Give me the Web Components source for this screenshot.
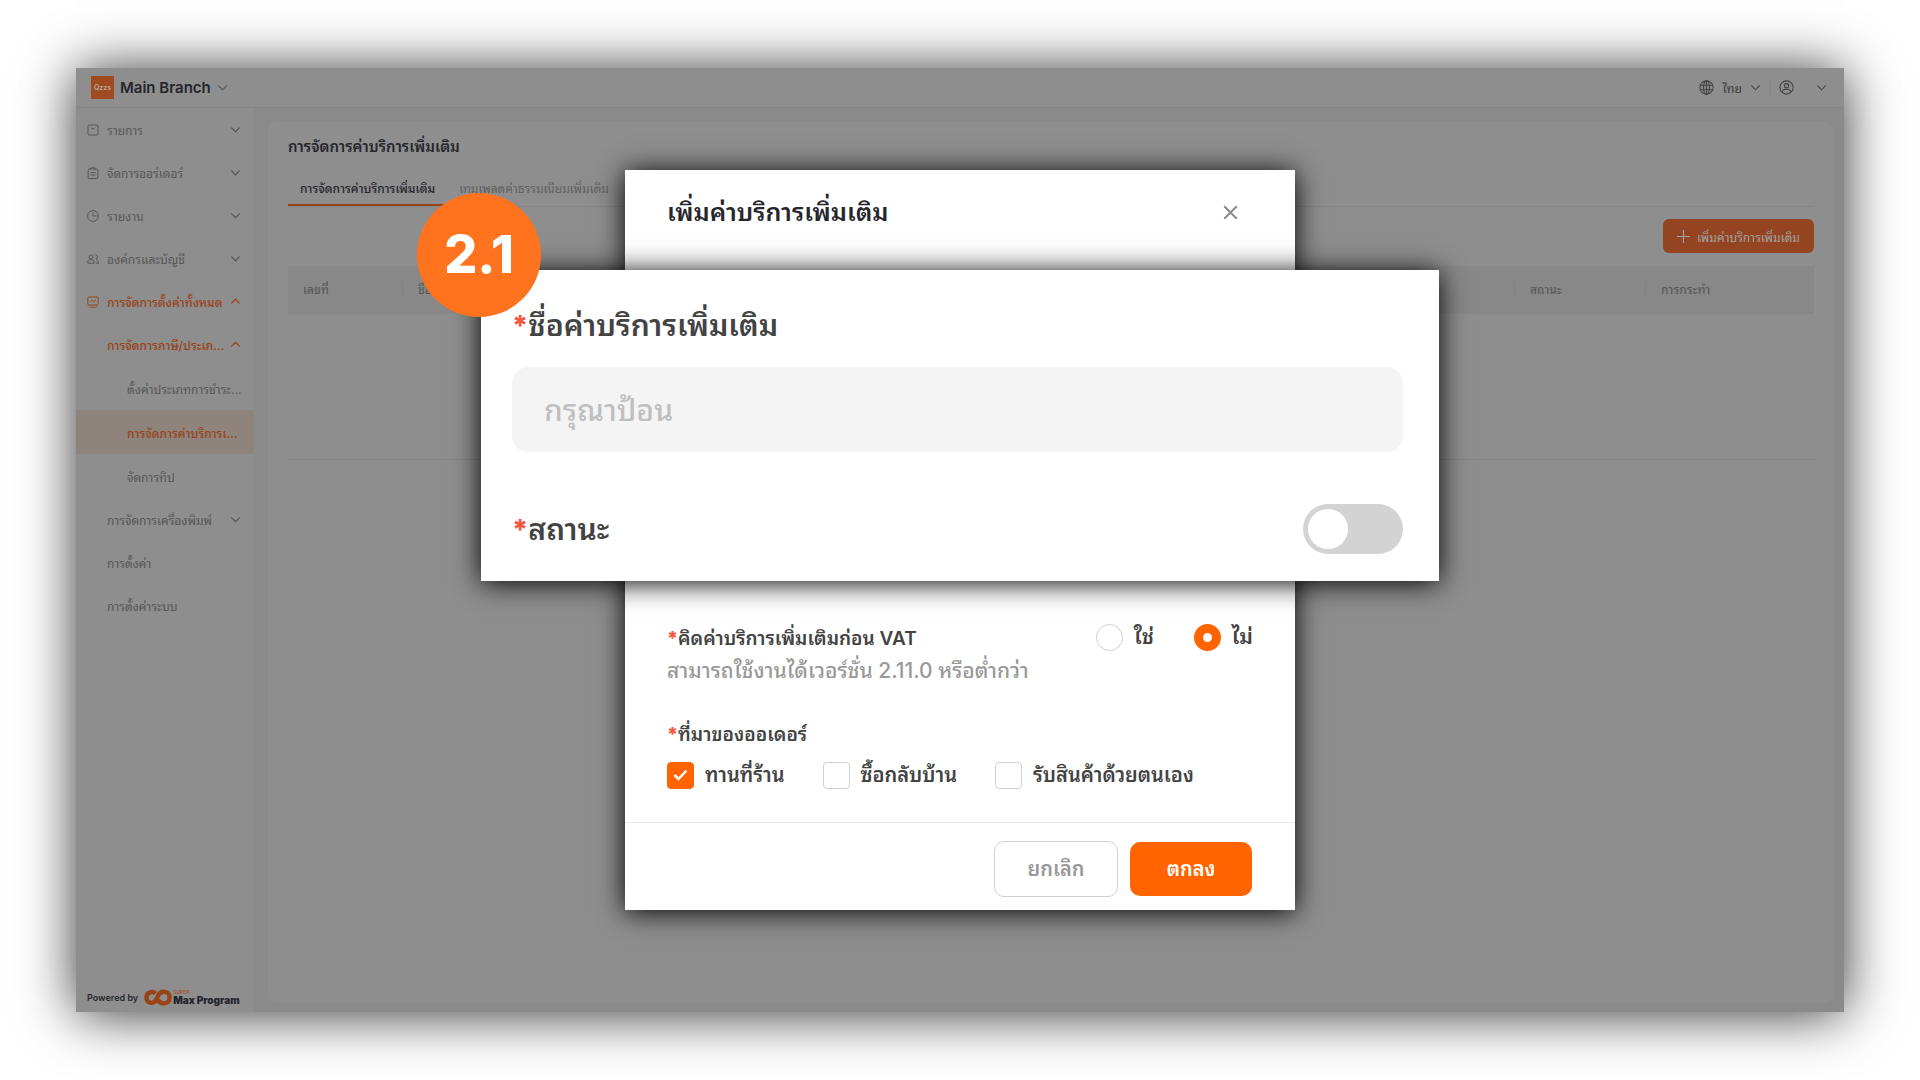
<!DOCTYPE html>
<html lang="th">
<head>
<meta charset="utf-8">
<title>การจัดการค่าบริการเพิ่มเติม</title>
<style>
  body {
    margin: 0;
    background: #fff;
    font-family: Inter, "Noto Sans Thai Looped", "Noto Sans Thai", "Noto Sans", "DejaVu Sans", sans-serif;
  }
</style>
</head>
<body>
<admin-stage>
  <admin-window>
    <top-bar slot="top"></top-bar>
    <side-menu slot="side">
      <menu-row icon="box" arrow="down">รายการ</menu-row>
      <menu-row icon="list" arrow="down">จัดการออร์เดอร์</menu-row>
      <menu-row icon="clock" arrow="down">รายงาน</menu-row>
      <menu-row icon="team" arrow="down">องค์กรและบัญชี</menu-row>
      <menu-row icon="setting" arrow="up" open>การจัดการตั้งค่าทั้งหมด</menu-row>
      <menu-row level="2" arrow="up" open>การจัดการภาษี/ประเภ...</menu-row>
      <menu-row level="3">ตั้งค่าประเภทการชำระ...</menu-row>
      <menu-row level="3" open selected>การจัดการค่าบริการเ...</menu-row>
      <menu-row level="3">จัดการทิป</menu-row>
      <menu-row level="2" arrow="down">การจัดการเครื่องพิมพ์</menu-row>
      <menu-row level="2">การตั้งค่า</menu-row>
      <menu-row level="2">การตั้งค่าระบบ</menu-row>
    </side-menu>
    <service-page></service-page>
  </admin-window>
  <charge-dialog slot="dialog">
    <focus-panel step="2.1"></focus-panel>
  </charge-dialog>
</admin-stage>

<script>
const ICONS = {
  box: '<rect x="1" y="1" width="10" height="10" rx="1"/><path d="M4 3.500c.4 1.800 3.600 1.800 4 0"/>',
  list: '<rect x="1.200" y="2" width="9.600" height="9.500" rx="1"/><path d="M4 2.800V.8h4v2M3.500 5.500h5M3.500 8h5"/>',
  clock: '<circle cx="6" cy="6" r="5.400"/><path d="M6 2.400V6h3.800"/>',
  team: '<circle cx="4" cy="3.800" r="1.900"/><path d="M.8 10.200V9c0-1.600 1-2.200 2.200-2.200h2C6.300 6.800 7.200 7.400 7.200 9v1.200zM7.600 1.900h1a1.900 1.900 0 0 1 0 3.800M9 6.800c1.600 0 2.300.7 2.300 2v1.400H9"/>',
  setting: '<rect x=".8" y="1" width="10.400" height="8" rx="1.200"/><path d="M3.200 6l1.800-1.800L6.600 5.800 9 3.600M3.500 11.200h5M1.800 10.200l1 .8M10.200 10.200l-1 .8"/>',
  down: '<path d="M1.500 4l4.500 4.500L10.500 4"/>',
  up: '<path d="M1.500 8L6 3.500 10.500 8"/>',
  globe: '<circle cx="6" cy="6" r="5.300"/><ellipse cx="6" cy="6" rx="2.400" ry="5.300"/><path d="M1.200 4.200h9.600M1.200 7.800h9.600M6 .7v10.600"/>',
  user: '<circle cx="6" cy="6" r="5.300"/><circle cx="6" cy="4.600" r="1.700"/><path d="M2.600 9.600C3 7.700 4.500 7.400 6 7.400s3 .3 3.400 2.200"/>',
  plus: '<path d="M6 0v12M0 6h12"/>',
  close: '<path d="M1 1l10 10M11 1L1 11"/>'
};

function icon(name, size = 12, stroke = 1) {
  return `<svg width="${size}" height="${size}" viewBox="0 0 12 12" fill="none" stroke="currentColor" stroke-width="${stroke}" aria-hidden="true">${ICONS[name]}</svg>`;
}

class BaseElement extends HTMLElement {
  constructor() {
    super();
    this.attachShadow({mode: 'open'});
  }

  connectedCallback() {
    this.shadowRoot.innerHTML = `<style>
      * { box-sizing: border-box; }
      svg { display: block; flex: none; }
      button { font: inherit; cursor: pointer; }
    </style>${this.render()}`;
  }
}

class AdminStage extends BaseElement {
  render() {
    return `<style>
      :host {
        position: relative;
        display: flex;
        box-sizing: border-box;
        min-height: 100vh;
        padding: 68px 76px;
      }
      .overlay {
        position: absolute;
        inset: 0;
        display: flex;
        align-items: center;
        justify-content: center;
      }
    </style>
    <slot></slot>
    <div class="overlay"><slot name="dialog"></slot></div>`;
  }
}

class AdminWindow extends BaseElement {
  render() {
    return `<style>
      :host {
        flex: 1;
        display: flex;
        flex-direction: column;
        background: #8a8a8a;
        box-shadow: 0 2px 52px rgba(0, 0, 0, .8);
      }
      .body {
        flex: 1;
        display: flex;
      }
    </style>
    <slot name="top"></slot>
    <div class="body"><slot name="side"></slot><slot></slot></div>`;
  }
}

class TopBar extends BaseElement {
  render() {
    return `<style>
      :host {
        display: flex;
        align-items: center;
        justify-content: space-between;
        height: 40px;
        box-sizing: border-box;
        padding: 0 17px 0 15px;
        background: #8e8e8e;
        border-bottom: 1px solid #868686;
        color: #444;
      }
      button {
        display: flex;
        align-items: center;
        padding: 0;
        border: 0;
        background: none;
        color: inherit;
      }
      .branch { gap: 6px; color: #26262c; font-size: 15px; font-weight: 600; }
      .branch svg { color: #555; }
      .logo {
        width: 23px;
        height: 23px;
        background: #a04a20;
        color: #b9a79d;
        font-size: 7px;
        line-height: 23px;
        text-align: center;
      }
      .tools { display: flex; align-items: center; }
      .lang { gap: 8px; padding-right: 9px; border-right: 1px solid #868686; font-size: 12px; font-weight: 500; }
      .user { gap: 22px; padding-left: 8px; }
    </style>
    <button class="branch"><span class="logo">Qzzs</span>Main Branch ${icon('down', 11, 1.2)}</button>
    <div class="tools">
      <button class="lang">${icon('globe', 15, 0.9)}ไทย ${icon('down', 11, 1.2)}</button>
      <button class="user" aria-label="บัญชี">${icon('user', 15, 0.9)}${icon('down', 11, 1.2)}</button>
    </div>`;
  }
}

class SideMenu extends BaseElement {
  render() {
    return `<style>
      :host {
        display: flex;
        flex-direction: column;
        justify-content: space-between;
        width: 178px;
        flex: none;
        background: #8e8e8e;
      }
      footer {
        display: flex;
        align-items: center;
        gap: 6px;
        height: 30px;
        padding-left: 11px;
        color: #26262c;
        font-size: 9px;
        font-weight: 600;
      }
      .brand { display: flex; align-items: center; gap: 1px; }
      .name { display: flex; flex-direction: column; line-height: 10px; font-weight: 900; font-size: 10px; }
      .name small { color: #a04a20; font-size: 5px; line-height: 5px; font-weight: 500; }
    </style>
    <nav><slot></slot></nav>
    <footer>Powered by
      <span class="brand">
        <svg width="28" height="17" viewBox="0 0 28 17" fill="none" stroke="#984318" stroke-width="4.400">
          <path d="M11.500 4.500C9 2 2.500 2.500 2.500 8.500s6.500 7 9.500 2.500l2.500-5C17 1.200 25.600 1.500 25.600 8.500s-8.600 7.500-11.600 2.500"/>
        </svg>
        <span class="name"><small>SUPER</small>Max Program</span>
      </span>
    </footer>`;
  }
}

class MenuRow extends BaseElement {
  render() {
    const name = this.getAttribute('icon');
    const arrow = this.getAttribute('arrow');
    return `<style>
      :host { display: block; color: #575757; font-size: 12px; }
      :host([open]) { color: #984318; font-weight: 500; }
      :host([selected]) { background: #8e847c; }
      a {
        display: flex;
        align-items: center;
        gap: 8px;
        height: 43px;
        padding: 0 13px 0 11px;
        color: inherit;
        text-decoration: none;
      }
      :host([level="2"]) a { padding-left: 31px; }
      :host([level="3"]) a { height: 44px; padding-left: 51px; }
      .label { flex: 1; min-width: 0; white-space: nowrap; }
    </style>
    <a href="#">${name ? icon(name) : ''}<span class="label"><slot></slot></span>${arrow ? icon(arrow, 11, 1.3) : ''}</a>`;
  }
}

class ServicePage extends BaseElement {
  render() {
    return `<style>
      :host {
        flex: 1;
        display: flex;
        flex-direction: column;
        margin: 14px 11px 9px 14px;
        padding: 13px 19px 20px 20px;
        border-radius: 8px;
        background: #8e8e8e;
        color: #5a5a5a;
        font-size: 12px;
      }
      h1 { margin: 0; color: #26262c; font-size: 15px; line-height: 24px; font-weight: 600; }
      .tabs { display: flex; margin-top: 13px; border-bottom: 1px solid #868686; }
      .tabs a {
        padding: 2px 12px 0;
        line-height: 30px;
        border-bottom: 2px solid transparent;
        color: #606060;
        text-decoration: none;
        white-space: nowrap;
      }
      .tabs a.active { border-color: #984318; color: #26262c; font-weight: 500; }
      .add {
        display: flex;
        align-items: center;
        align-self: flex-end;
        gap: 7px;
        height: 34px;
        margin: 12px 0 13px;
        padding: 0 14px;
        border: 0;
        border-radius: 6px;
        background: #944420;
        color: #a3a3a3;
        font-size: 12px;
      }
      table { width: 100%; border-collapse: collapse; table-layout: fixed; }
      th { height: 48px; padding: 0; background: #888; text-align: left; font-weight: 500; }
      th span { display: block; padding-left: 15px; line-height: 18px; }
      th + th span { border-left: 1px solid #838383; }
      td { height: 145px; border-bottom: 1px solid #868686; }
    </style>
    <h1>การจัดการค่าบริการเพิ่มเติม</h1>
    <nav class="tabs">
      <a class="active" href="#">การจัดการค่าบริการเพิ่มเติม</a>
      <a href="#">เทมเพลตค่าธรรมเนียมเพิ่มเติม</a>
    </nav>
    <button class="add">${icon('plus', 13)}เพิ่มค่าบริการเพิ่มเติม</button>
    <table>
      <colgroup><col style="width:114px"><col><col style="width:131px"><col style="width:169px"></colgroup>
      <thead><tr>
        <th><span>เลขที่</span></th><th><span>ชื่อ</span></th><th><span>สถานะ</span></th><th><span>การกระทำ</span></th>
      </tr></thead>
      <tbody><tr><td colspan="4"></td></tr></tbody>
    </table>`;
  }
}

class ChoiceInput extends BaseElement {
  render() {
    const checked = this.hasAttribute('checked') ? 'checked' : '';
    return `<style>
      :host { display: block; }
      :host([type="radio"]) { font-size: 21px; }
      label { display: flex; align-items: center; gap: 11px; white-space: nowrap; }
      input {
        appearance: none;
        flex: none;
        width: 27px;
        height: 27px;
        margin: 0;
        border: 1px solid #d0d0d0;
        border-radius: 4px;
        background: #fff;
      }
      input[type="radio"] { border-radius: 50%; }
      input[type="radio"]:checked { border: 9px solid #ff6400; }
      .box { position: relative; display: flex; }
      .box svg { position: absolute; inset: 0; color: #fff; }
      input[type="checkbox"]:checked { background: #ff6400; border-color: #ff6400; }
    </style>
    <label><span class="box"><input type="${this.getAttribute('type')}" ${checked}>${
      this.getAttribute('type') === 'checkbox' && checked
        ? '<svg width="27" height="27" viewBox="0 0 27 27" fill="none" stroke="currentColor" stroke-width="2.500"><path d="M7.500 13l4 4 8-8.500"/></svg>'
        : ''
    }</span><slot></slot></label>`;
  }
}

class FocusPanel extends BaseElement {
  render() {
    return `<style>
      :host {
        position: relative;
        display: flex;
        flex-direction: column;
        box-sizing: border-box;
        margin: 0 -144px;
        padding: 31px 36px 27px 31px;
        background: #fff;
        box-shadow: 0 2px 26px #000;
        color: #434343;
        font-size: 30px;
        line-height: 48px;
        font-weight: 600;
      }
      i { color: #f5553d; font-style: normal; font-weight: 800; font-size: 28px; }
      input[type="text"] {
        width: 100%;
        height: 85px;
        margin: 17px 0 52px;
        padding: 0 32px;
        border: 0;
        border-radius: 16px;
        background: #f4f4f4;
        font: inherit;
        font-weight: 500;
      }
      ::placeholder { color: #bfbfbf; opacity: 1; }
      .status { display: flex; align-items: center; justify-content: space-between; }
      .switch {
        appearance: none;
        width: 100px;
        height: 50px;
        margin: 0;
        padding: 5px;
        border-radius: 25px;
        background: #d3d3d3;
      }
      .switch::before {
        content: "";
        display: block;
        width: 40px;
        height: 40px;
        border-radius: 50%;
        background: #fff;
      }
      .step {
        position: absolute;
        top: -77px;
        left: -64px;
        width: 124px;
        height: 124px;
        border-radius: 50%;
        background: #ff731f;
        color: #fff;
        font: 800 52px/124px Inter, sans-serif;
        text-align: center;
      }
    </style>
    <label for="name"><i>*</i>ชื่อค่าบริการเพิ่มเติม</label>
    <input id="name" type="text" placeholder="กรุณาป้อน">
    <div class="status">
      <label for="status"><i>*</i>สถานะ</label>
      <input id="status" class="switch" type="checkbox" role="switch">
    </div>
    <span class="step">${this.getAttribute('step')}</span>`;
  }
}

class ChargeDialog extends BaseElement {
  render() {
    return `<style>
      :host {
        display: block;
        width: 670px;
        background: #fff;
        box-shadow: 0 2px 26px #000;
        color: #434343;
        font-size: 20px;
        line-height: 28px;
        font-weight: 600;
      }
      header {
        display: flex;
        align-items: center;
        justify-content: space-between;
        height: 100px;
        padding: 0 57px 16px 42px;
        color: #26262c;
      }
      h2 { margin: 0; font-size: 25px; line-height: 36px; font-weight: 600; }
      button { border: 0; border-radius: 10px; }
      .close { padding: 0; background: none; color: #8a8a8a; }
      i { color: #f5553d; font-style: normal; font-weight: 800; }
      .body { padding: 42px 42px 33px; }
      .row { display: flex; justify-content: space-between; }
      .row p { line-height: 32px; }
      .radios { display: flex; gap: 40px; }
      p { margin: 0; font-size: 19px; }
      .hint { margin: 2px 0 36px; color: #999; font-size: 21px; font-weight: 500; }
      .sources { display: flex; gap: 38px; margin-top: 12px; }
      footer {
        display: flex;
        align-items: center;
        justify-content: flex-end;
        gap: 12px;
        height: 88px;
        padding: 4px 43px 0 0;
        border-top: 1px solid #e8e8e8;
      }
      footer button { width: 122px; height: 54px; background: #ff6400; color: #fff; font-weight: 600; }
      footer .cancel { width: 124px; height: 56px; border: 1px solid #d0d0d0; background: #fff; color: #999; }
    </style>
    <header>
      <h2>เพิ่มค่าบริการเพิ่มเติม</h2>
      <button class="close" aria-label="ปิด">${icon('close', 15, 1.6)}</button>
    </header>
    <slot></slot>
    <div class="body">
      <div class="row">
        <p><i>*</i>คิดค่าบริการเพิ่มเติมก่อน VAT</p>
        <div class="radios">
          <choice-input type="radio">ใช่</choice-input>
          <choice-input type="radio" checked>ไม่</choice-input>
        </div>
      </div>
      <p class="hint">สามารถใช้งานได้เวอร์ชั่น 2.11.0 หรือต่ำกว่า</p>
      <p><i>*</i>ที่มาของออเดอร์</p>
      <div class="sources">
        <choice-input type="checkbox" checked>ทานที่ร้าน</choice-input>
        <choice-input type="checkbox">ซื้อกลับบ้าน</choice-input>
        <choice-input type="checkbox">รับสินค้าด้วยตนเอง</choice-input>
      </div>
    </div>
    <footer>
      <button class="cancel">ยกเลิก</button>
      <button>ตกลง</button>
    </footer>`;
  }
}

customElements.define('admin-stage', AdminStage);
customElements.define('admin-window', AdminWindow);
customElements.define('top-bar', TopBar);
customElements.define('side-menu', SideMenu);
customElements.define('menu-row', MenuRow);
customElements.define('service-page', ServicePage);
customElements.define('choice-input', ChoiceInput);
customElements.define('focus-panel', FocusPanel);
customElements.define('charge-dialog', ChargeDialog);
</script>
</body>
</html>
